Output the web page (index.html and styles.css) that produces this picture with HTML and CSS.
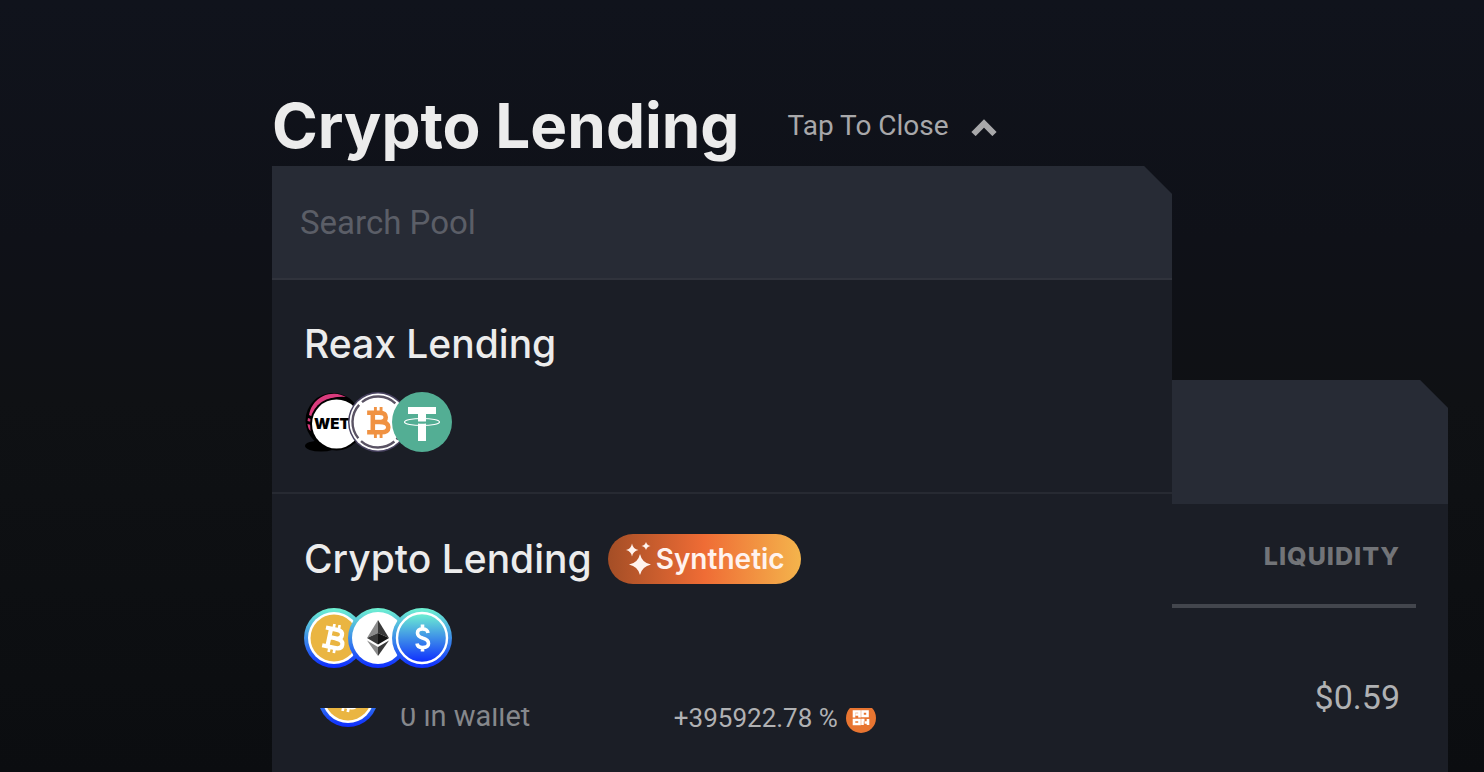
FILE: index.html
```html
<!DOCTYPE html>
<html lang="en">
<head>
<meta charset="utf-8">
<meta name="viewport" content="width=device-width, initial-scale=1">
<title>Crypto Lending</title>
<link rel="stylesheet" href="styles.css">
</head>
<body>
<svg class="defs" width="0" height="0" aria-hidden="true">
  <defs>
    <linearGradient id="ring" x1="0" y1="0" x2="0" y2="1">
      <stop offset="0" stop-color="#6ff3d1"/>
      <stop offset="1" stop-color="#0d2bff"/>
    </linearGradient>
    <symbol id="bitcoin" viewBox="0 0 24 30">
      <path d="M1 5.500H13Q19 5.500 19 10Q19 14.500 14 14.500H6M13 14.500Q21.500 14.500 21.500 19.500Q21.500 24.500 14 24.500H1M6.500 5.500V24.500" fill="none" stroke="currentColor" stroke-width="4.400"/>
      <path d="M9 0V5M14.500 0V5M9 25V30M14.500 25V30" fill="none" stroke="currentColor" stroke-width="2.800"/>
    </symbol>
    <symbol id="btc-coin" viewBox="0 0 60 60">
      <circle cx="30" cy="30" r="30" fill="url(#ring)"/>
      <circle cx="30" cy="30" r="26" fill="#fff"/>
      <circle cx="30" cy="30" r="23.500" fill="#eab541"/>
      <use href="#bitcoin" x="19" y="16" width="23" height="29" color="#fff" transform="rotate(12 30 30)"/>
    </symbol>
  </defs>
</svg>
<main class="page">
  <header class="pool-header">
    <h1 class="pool-title">Crypto Lending</h1>
    <button class="toggle" type="button" aria-expanded="true">
      Tap To Close
      <svg class="chevron" viewBox="0 0 26 20" aria-hidden="true"><path d="M2.500 18L13 7.500L23.500 18" fill="none" stroke="currentColor" stroke-width="6"/></svg>
    </button>
    <div class="menu">
      <input class="search" type="text" placeholder="Search Pool" aria-label="Search Pool">
      <section class="pool">
        <h2 class="pool-name">Reax Lending</h2>
        <div class="coins">
          <svg class="coin" viewBox="0 0 60 60" aria-hidden="true">
            <ellipse cx="17" cy="54" rx="16" ry="5.500" fill="#000"/>
            <circle cx="29" cy="28.500" r="27.500" fill="#000"/>
            <path d="M5 23A25 25 0 0 1 42 5Q19 3 9 25Z" fill="#d93b7d"/>
            <path d="M4 26L8 27.500L7.500 30L3.500 29ZM3.500 32L7 33L6.500 39Q4 37 3.500 32Z" fill="#d93b7d"/>
            <circle cx="32.500" cy="32" r="26.500" fill="#000"/>
            <circle cx="32.500" cy="32" r="24.500" fill="#fff"/>
            <text class="wet" x="10" y="37">WET</text>
          </svg>
          <svg class="coin" viewBox="0 0 60 60" aria-hidden="true">
            <circle cx="30" cy="30" r="30" fill="#4a4462"/>
            <circle cx="30" cy="30" r="28.500" fill="#fff"/>
            <circle cx="30" cy="30" r="25.500" fill="none" stroke="#5a5364" stroke-width="2.400" stroke-dasharray="36 4.055" transform="rotate(50 30 30)"/>
            <use href="#bitcoin" x="18" y="15" width="25" height="31" color="#f09242"/>
          </svg>
          <svg class="coin" viewBox="0 0 60 60" aria-hidden="true">
            <circle cx="30" cy="30" r="30" fill="#53ae94"/>
            <path d="M16 15H44V22H34V49H26V22H16Z" fill="#fff"/>
            <ellipse cx="30" cy="30" rx="17.500" ry="3.500" fill="none" stroke="#fff" stroke-width="1.200"/>
            <path d="M26 29.500H34V31.500Q30 32 26 31.500Z" fill="#53ae94"/>
          </svg>
        </div>
      </section>
      <section class="pool">
        <div class="pool-heading">
          <h2 class="pool-name">Crypto Lending</h2>
          <span class="badge">
            <svg class="sparkles" viewBox="0 0 26 34" aria-hidden="true"><path fill="currentColor" d="M14 12Q16 21 25 22.500Q16 24.500 14 33Q12 24.500 3 22.500Q12 21 14 12ZM6 1.500Q7 7 12.500 8Q7 9 6 14.500Q5 9 0 8Q5 7 6 1.500ZM20 0Q21 3.500 24.500 4Q21 4.500 20 8Q19 4.500 15.500 4Q19 3.500 20 0Z"/></svg>
            Synthetic
          </span>
        </div>
        <div class="coins">
          <svg class="coin" aria-hidden="true"><use href="#btc-coin"/></svg>
          <svg class="coin" viewBox="0 0 60 60" aria-hidden="true">
            <circle cx="30" cy="30" r="30" fill="url(#ring)"/>
            <circle cx="30" cy="30" r="26" fill="#fff"/>
            <path d="M30 12L19 30L30 25Z" fill="#8b8b8b"/>
            <path d="M30 12L41 30L30 25Z" fill="#393939"/>
            <path d="M30 25L19 30L30 36.500Z" fill="#393939"/>
            <path d="M30 25L41 30L30 36.500Z" fill="#141414"/>
            <path d="M19 32.500L30 39V48Z" fill="#8b8b8b"/>
            <path d="M41 32.500L30 39V48Z" fill="#393939"/>
          </svg>
          <svg class="coin" viewBox="0 0 60 60" aria-hidden="true">
            <circle cx="30" cy="30" r="30" fill="url(#ring)"/>
            <circle cx="30" cy="30" r="25" fill="url(#ring)" stroke="#fff" stroke-width="2.400"/>
            <path d="M36 25Q35.500 21 30.500 21Q25.500 21 25.500 25Q25.500 28.500 30.500 30Q36.500 31.500 36.500 35.500Q36.500 39.500 30.500 39.500Q25.500 39.500 25 35.500M30.500 16.500V21M30.500 39.500V43.500" fill="none" stroke="#fff" stroke-width="3.600"/>
          </svg>
        </div>
      </section>
    </div>
  </header>

  <section class="card">
    <div class="card-head"></div>
    <div class="card-body">
      <table class="assets">
        <colgroup><col class="col-asset"><col class="col-apy"><col></colgroup>
        <thead>
          <tr><td></td><td></td><th scope="col">LIQUIDITY</th></tr>
        </thead>
        <tbody>
          <tr>
            <td>
              <div class="asset">
                <svg class="coin" aria-hidden="true"><use href="#btc-coin"/></svg>
                <span class="wallet">0 in wallet</span>
              </div>
            </td>
            <td>
              <div class="apy">
                +395922.78 %
                <svg class="reward" viewBox="0 0 30 30" aria-hidden="true">
                  <circle cx="15" cy="15" r="15" fill="#e87531"/>
                  <path d="M8 14.500V8.500H13.500V11.500H9.500M13.500 11.500V14.500M16.500 8.500H21.500V13H16.500ZM8 17H13.500V21H8ZM16.500 22V17H18.500M18.500 19.500H22M22 16V22" fill="none" stroke="#fff" stroke-width="2.600"/>
                </svg>
              </div>
            </td>
            <td class="amount">$0.59</td>
          </tr>
        </tbody>
      </table>
    </div>
  </section>
</main>
</body>
</html>
```
FILE: styles.css
```css
* {
  box-sizing: border-box;
}

body {
  margin: 0;
  min-height: 100vh;
  overflow: hidden;
  background: linear-gradient(#10131c 0, #0f1118 240px, #0f1114 400px, #0b0d10 772px);
  color: #ececec;
  font-family: Roboto, "Liberation Sans", sans-serif;
}

h1,
h2 {
  margin: 0;
}

.defs {
  position: absolute;
}

.page {
  margin: 0 36px 0 272px;
}

.pool-header {
  position: relative;
  display: flex;
  align-items: center;
  gap: 48px;
  padding-top: 86px;
}

.pool-title {
  font-family: Inter, sans-serif;
  font-size: 62px;
  line-height: 80px;
  font-weight: 700;
}

.toggle {
  display: flex;
  align-items: center;
  gap: 22px;
  padding: 0;
  border: 0;
  background: none;
  color: #a8a8aa;
  font: 28px/40px Roboto, sans-serif;
}

.chevron {
  width: 26px;
  height: 20px;
}

.menu {
  position: absolute;
  top: 100%;
  left: 0;
  z-index: 1;
  width: 100%;
  max-width: 900px;
  background: #1b1e26;
  clip-path: polygon(0 0, calc(100% - 28px) 0, 100% 28px, 100% 100%, 0 100%);
}

.search {
  display: block;
  width: 100%;
  height: 114px;
  padding: 0 28px;
  border: 0;
  border-bottom: 2px solid #30333c;
  border-radius: 0;
  outline: 0;
  background: #272b35;
  color: #ececec;
  font: 33px/40px Roboto, sans-serif;
}

.search::placeholder {
  color: #5b5e67;
  opacity: 1;
}

.pool {
  display: flex;
  flex-direction: column;
  gap: 24px;
  padding: 40px 32px;
}

.pool + .pool {
  border-top: 2px solid #272a32;
}

.pool-heading {
  display: flex;
  align-items: center;
  gap: 16px;
}

.pool-name {
  font-family: Inter, sans-serif;
  font-size: 39px;
  line-height: 48px;
  font-weight: 500;
}

.badge {
  display: flex;
  align-items: center;
  gap: 4px;
  height: 50px;
  padding: 0 16px 0 18px;
  border-radius: 25px;
  background: linear-gradient(90deg, #a44e26, #ef6c35 50%, #f4b44c);
  color: #fff3ee;
  font-family: Inter, sans-serif;
  font-size: 28px;
  font-weight: 600;
}

.sparkles {
  width: 26px;
  height: 34px;
}

.coins {
  display: flex;
}

.coin {
  flex: none;
  width: 60px;
  height: 60px;
}

.coin + .coin {
  margin-left: -16px;
}

.wet {
  font: 900 15px Inter, sans-serif;
}

.card {
  margin-top: 214px;
  background: #1b1e26;
  clip-path: polygon(0 0, calc(100% - 28px) 0, 100% 28px, 100% 100%, 0 100%);
}

.card-head {
  height: 124px;
  background: #272b35;
}

.card-body {
  padding: 0 32px;
}

.assets {
  width: 100%;
  table-layout: fixed;
  border-collapse: separate;
  border-spacing: 0;
}

.assets td,
.assets th {
  padding: 0 16px 0 14px;
}

.col-asset {
  width: 32%;
}

.col-apy {
  width: 34%;
}

.assets thead td,
.assets th {
  height: 104px;
  border-bottom: 4px solid #43464d;
}

.assets th {
  padding-top: 4px;
  color: #727478;
  font-family: Inter, sans-serif;
  font-size: 25px;
  font-weight: 800;
  letter-spacing: 1px;
  text-align: right;
}

.assets tbody td {
  height: 178px;
}

.asset {
  display: flex;
  align-items: center;
  gap: 22px;
}

.wallet {
  padding-top: 38px;
  color: #86888c;
  font-size: 29px;
  line-height: 40px;
}

.apy {
  display: flex;
  align-items: center;
  gap: 8px;
  padding-top: 42px;
  color: #b0b1b3;
  font-size: 26px;
  line-height: 40px;
}

.reward {
  width: 30px;
  height: 30px;
}

.assets .amount {
  color: #b0b1b3;
  font-size: 34px;
  text-align: right;
}
```
